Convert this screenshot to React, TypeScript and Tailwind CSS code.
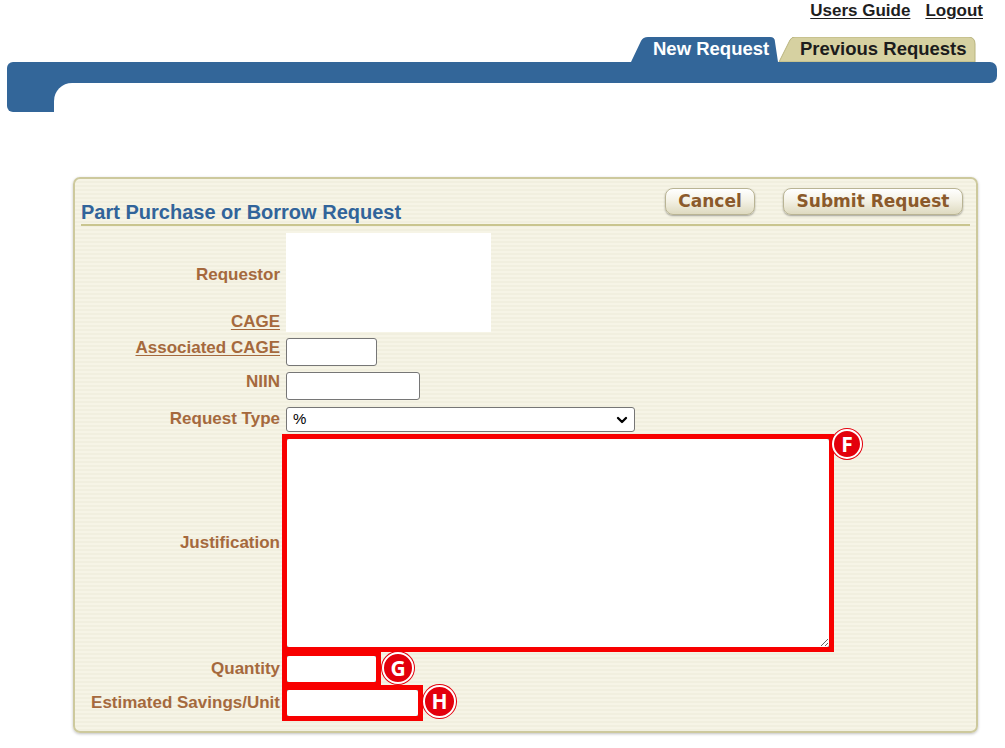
import { ChevronDown } from "lucide-react";

const label =
  "text-right text-[17px] font-bold leading-[20px] text-[#a5693d] whitespace-nowrap";
const field = "block rounded-[3px] border border-[#767676] bg-white outline-none";

function Badge({ letter, className }: { letter: string; className: string }) {
  return (
    <div
      className={
        "absolute flex items-center justify-center rounded-full border-2 border-white bg-[#e3000c] font-['Open_Sans',sans-serif] text-[21px] font-bold leading-none text-white shadow-[0_0_0_1px_#e3000c] " +
        className
      }
    >
      {letter}
    </div>
  );
}

function Tab({ active, children }: { active?: boolean; children: string }) {
  return (
    <div
      className={
        "relative flex h-[25px] items-center " +
        (active ? "w-[148px] pl-[22px] text-white" : "-ml-[1px] w-[198px] pl-[22px] text-[#1c1c1c]")
      }
    >
      <svg
        className="absolute inset-0 h-full w-full"
        viewBox={active ? "0 0 148 25" : "0 0 198 25"}
        preserveAspectRatio="none"
      >
        {active ? (
          <path d="M0 25 L10 4 Q12 0 17 0 L139 0 Q144 0 144 5 L147 25 Z" fill="#336699" />
        ) : (
          <path
            d="M1 25 L12 3 Q13.5 0 17 0 L190 0 Q197 0 197 7 L197 25 Z"
            fill="#d6d1a1"
            stroke="#b9b47f"
            strokeWidth="1"
          />
        )}
      </svg>
      <span className="relative text-[18.5px] font-bold leading-none">{children}</span>
    </div>
  );
}

export default function App() {
  return (
    <div className="h-[748px] w-[1005px] overflow-hidden bg-white font-['Liberation_Sans',Arial,sans-serif]">
      {/* top links */}
      <div className="flex h-[22px] justify-end gap-[15px] pr-[22px] pt-[1px] text-[17px] font-bold leading-[20px] text-[#1e1e1e]">
        <a className="underline underline-offset-2">Users Guide</a>
        <a className="underline underline-offset-2">Logout</a>
      </div>

      {/* tabs */}
      <div className="mt-[15px] flex justify-end pr-[29px]">
        <Tab active>New Request</Tab>
        <Tab>Previous Requests</Tab>
      </div>

      {/* header bar */}
      <div className="mx-[8px] ml-[7px]">
        <div className="h-[21px] rounded-tl-[6px] rounded-r-[7px] bg-[#336699]" />
        <div className="flex">
          <div className="h-[29px] w-[47px] rounded-bl-[6px] bg-[#336699]" />
          <div className="h-[18px] w-[18px] bg-[#336699]">
            <div className="h-full w-full rounded-tl-[18px] bg-white" />
          </div>
        </div>
      </div>

      {/* panel */}
      <div className="ml-[73px] mt-[65px] w-[905px] rounded-[7px] border-[2px] border-[#cdc99d] bg-[image:repeating-linear-gradient(to_bottom,#f6f4e6_0px,#f6f4e6_2px,#f1efdf_2px,#f1efdf_4px)] pb-[14px] shadow-[0_1px_3px_rgba(0,0,0,0.25)]">
        <div className="mx-[6px] flex items-end justify-between border-b-[2px] border-[#c9c58f] pt-[9px]">
          <h1 className="mb-[0px] text-[20px] font-bold leading-[23px] text-[#31649a]">
            Part Purchase or Borrow Request
          </h1>
          <div className="mb-[9px] mr-[7px] flex gap-[28px] font-['DejaVu_Sans',Verdana,sans-serif] text-[17px] font-bold text-[#8b5a2b]">
            <button className="h-[27px] w-[90px] rounded-[8px] border border-[#b9b494] bg-[linear-gradient(to_bottom,#ffffff,#f4f2e6_45%,#dedac0)] leading-none shadow-[0_1px_2px_rgba(0,0,0,0.35)]">
              Cancel
            </button>
            <button className="h-[27px] w-[180px] rounded-[8px] border border-[#b9b494] bg-[linear-gradient(to_bottom,#ffffff,#f4f2e6_45%,#dedac0)] leading-none shadow-[0_1px_2px_rgba(0,0,0,0.35)]">
              Submit Request
            </button>
          </div>
        </div>

        <div className="mt-[7px] flex flex-col">
          {/* requestor / cage */}
          <div className="flex gap-[6px]">
            <div className="flex h-[99px] w-[205px] flex-col">
              <div className={label + " mt-[32px]"}>Requestor</div>
              <div className={label + " mt-auto mb-[0px] underline underline-offset-2"}>CAGE</div>
            </div>
            <div className="h-[99px] w-[205px] bg-white" />
          </div>

          <div className="mt-[6px] flex items-start gap-[6px]">
            <div className={label + " w-[205px] underline underline-offset-2"}>Associated CAGE</div>
            <input className={field + " h-[28px] w-[91px] border-[#555]"} />
          </div>

          <div className="mt-[6px] flex items-start gap-[6px]">
            <div className={label + " w-[205px]"}>NIIN</div>
            <input className={field + " h-[28px] w-[134px]"} />
          </div>

          <div className="mt-[7px] flex items-start gap-[6px]">
            <div className={label + " mt-[2px] w-[205px]"}>Request Type</div>
            <div className="relative">
              <select className={field + " h-[25px] w-[349px] appearance-none pl-[6px] text-[15px] text-black"}>
                <option>%</option>
              </select>
              <ChevronDown
                className="pointer-events-none absolute right-[5px] top-[5px] h-[16px] w-[16px] text-black"
                strokeWidth={3.5}
              />
            </div>
          </div>

          <div className="mt-[6px] flex items-center gap-[6px]">
            <div className={label + " w-[205px]"}>Justification</div>
            <div className="relative">
              <textarea className={field + " h-[210px] w-[544px]"} />
              <div className="pointer-events-none absolute -inset-[4px] border-[5px] border-[#f80000]" />
              <Badge letter="F" className="-right-[32px] -top-[9px] h-[30px] w-[30px]" />
            </div>
          </div>

          <div className="mt-[7px] flex items-center gap-[6px]">
            <div className={label + " w-[205px]"}>Quantity</div>
            <div className="relative">
              <input className={field + " h-[28px] w-[91px]"} />
              <div className="pointer-events-none absolute -inset-[4px] border-[5px] border-[#f80000]" />
              <Badge letter="G" className="-right-[37px] -top-[3px] h-[32px] w-[32px]" />
            </div>
          </div>

          <div className="mt-[6px] flex items-center gap-[6px]">
            <div className={label + " w-[205px]"}>Estimated Savings/Unit</div>
            <div className="relative">
              <input className={field + " h-[28px] w-[133px]"} />
              <div className="pointer-events-none absolute -inset-[4px] border-[5px] border-[#f80000]" />
              <Badge letter="H" className="-right-[37px] -top-[4px] h-[33px] w-[33px]" />
            </div>
          </div>
        </div>
      </div>
    </div>
  );
}
